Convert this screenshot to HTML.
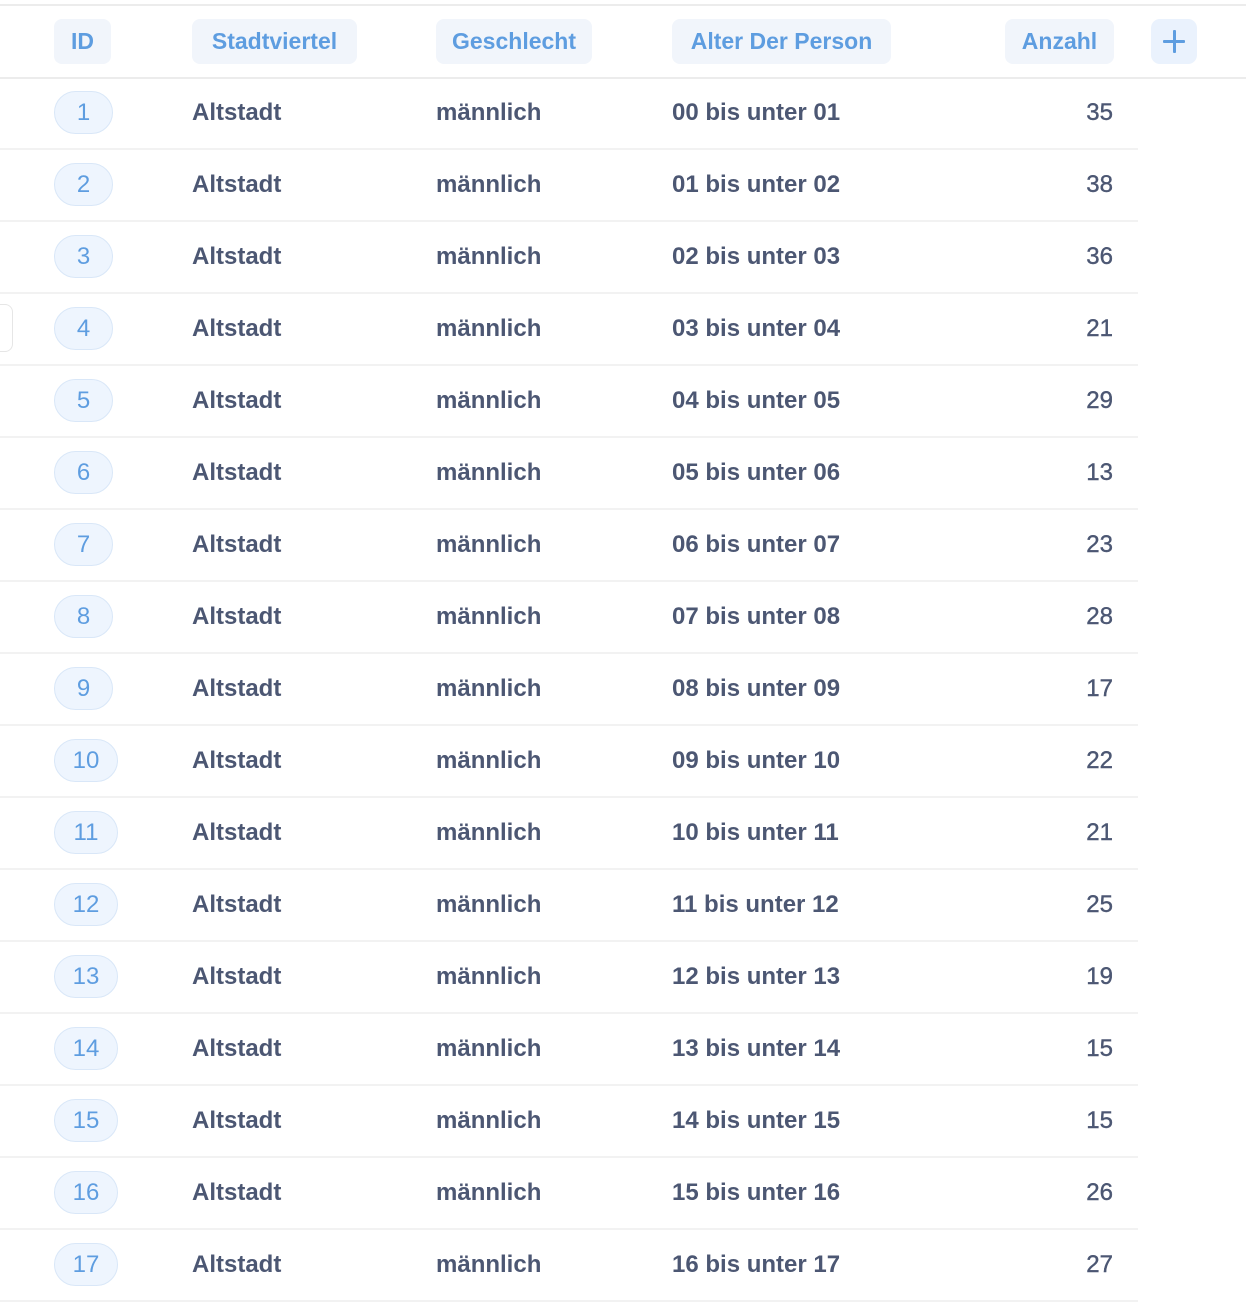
<!DOCTYPE html>
<html><head><meta charset="utf-8"><style>
*{margin:0;padding:0;box-sizing:border-box}
body{width:1246px;height:1306px;background:#fff;position:relative;overflow:hidden;font-family:"Liberation Sans",sans-serif;color:#4c5773}
.topline{position:absolute;left:0;top:4px;width:1246px;height:2px;background:#ececec}
.hline{position:absolute;left:0;top:77px;width:1246px;height:2px;background:#ececec}
.hp{position:absolute;top:19px;height:45px;background:#f1f5fb;border-radius:8px;color:#5e9de0;font-weight:bold;font-size:23px;line-height:45px;text-align:center}
.plus{position:absolute;left:1151px;top:19px;width:46px;height:45px;background:#eaf2fd;border-radius:9px}
.plus:before{content:"";position:absolute;left:12px;top:21px;width:22px;height:3px;background:#5e9de0;border-radius:1px}
.plus:after{content:"";position:absolute;left:21.5px;top:11px;width:3px;height:23px;background:#5e9de0;border-radius:1px}
.row{position:absolute;left:0;width:1138px;height:72px;border-bottom:2px solid #f2f2f2}
.row div{position:absolute;top:0;line-height:70px;font-size:24px;font-weight:bold;white-space:nowrap}
.row .id{left:54px;top:13px;height:43px;line-height:41px;border:1.5px solid #d9e7f8;background:#eef5fe;border-radius:22px;color:#5e9de0;font-weight:normal;text-align:center;font-size:24px}
.row .c1{left:192px}.row .c2{left:436px}.row .c3{left:672px}
.row .c4{right:25px;font-weight:normal;text-align:right;-webkit-text-stroke:0.4px #4c5773}
.side{position:absolute;left:-10px;top:304px;width:23px;height:48px;border:1.5px solid #e6e6e6;border-radius:8px}
</style></head><body>
<div class="topline"></div>
<div class="hp" style="left:54px;width:57px">ID</div>
<div class="hp" style="left:192px;width:165px">Stadtviertel</div>
<div class="hp" style="left:436px;width:156px">Geschlecht</div>
<div class="hp" style="left:672px;width:219px">Alter Der Person</div>
<div class="hp" style="left:1005px;width:109px">Anzahl</div>
<div class="plus"></div>
<div class="hline"></div>
<div class="side"></div>
<div class="row" style="top:78px"><div class="id" style="width:59px">1</div><div class="c1">Altstadt</div><div class="c2">männlich</div><div class="c3">00 bis unter 01</div><div class="c4">35</div></div>
<div class="row" style="top:150px"><div class="id" style="width:59px">2</div><div class="c1">Altstadt</div><div class="c2">männlich</div><div class="c3">01 bis unter 02</div><div class="c4">38</div></div>
<div class="row" style="top:222px"><div class="id" style="width:59px">3</div><div class="c1">Altstadt</div><div class="c2">männlich</div><div class="c3">02 bis unter 03</div><div class="c4">36</div></div>
<div class="row" style="top:294px"><div class="id" style="width:59px">4</div><div class="c1">Altstadt</div><div class="c2">männlich</div><div class="c3">03 bis unter 04</div><div class="c4">21</div></div>
<div class="row" style="top:366px"><div class="id" style="width:59px">5</div><div class="c1">Altstadt</div><div class="c2">männlich</div><div class="c3">04 bis unter 05</div><div class="c4">29</div></div>
<div class="row" style="top:438px"><div class="id" style="width:59px">6</div><div class="c1">Altstadt</div><div class="c2">männlich</div><div class="c3">05 bis unter 06</div><div class="c4">13</div></div>
<div class="row" style="top:510px"><div class="id" style="width:59px">7</div><div class="c1">Altstadt</div><div class="c2">männlich</div><div class="c3">06 bis unter 07</div><div class="c4">23</div></div>
<div class="row" style="top:582px"><div class="id" style="width:59px">8</div><div class="c1">Altstadt</div><div class="c2">männlich</div><div class="c3">07 bis unter 08</div><div class="c4">28</div></div>
<div class="row" style="top:654px"><div class="id" style="width:59px">9</div><div class="c1">Altstadt</div><div class="c2">männlich</div><div class="c3">08 bis unter 09</div><div class="c4">17</div></div>
<div class="row" style="top:726px"><div class="id" style="width:64px">10</div><div class="c1">Altstadt</div><div class="c2">männlich</div><div class="c3">09 bis unter 10</div><div class="c4">22</div></div>
<div class="row" style="top:798px"><div class="id" style="width:64px">11</div><div class="c1">Altstadt</div><div class="c2">männlich</div><div class="c3">10 bis unter 11</div><div class="c4">21</div></div>
<div class="row" style="top:870px"><div class="id" style="width:64px">12</div><div class="c1">Altstadt</div><div class="c2">männlich</div><div class="c3">11 bis unter 12</div><div class="c4">25</div></div>
<div class="row" style="top:942px"><div class="id" style="width:64px">13</div><div class="c1">Altstadt</div><div class="c2">männlich</div><div class="c3">12 bis unter 13</div><div class="c4">19</div></div>
<div class="row" style="top:1014px"><div class="id" style="width:64px">14</div><div class="c1">Altstadt</div><div class="c2">männlich</div><div class="c3">13 bis unter 14</div><div class="c4">15</div></div>
<div class="row" style="top:1086px"><div class="id" style="width:64px">15</div><div class="c1">Altstadt</div><div class="c2">männlich</div><div class="c3">14 bis unter 15</div><div class="c4">15</div></div>
<div class="row" style="top:1158px"><div class="id" style="width:64px">16</div><div class="c1">Altstadt</div><div class="c2">männlich</div><div class="c3">15 bis unter 16</div><div class="c4">26</div></div>
<div class="row" style="top:1230px"><div class="id" style="width:64px">17</div><div class="c1">Altstadt</div><div class="c2">männlich</div><div class="c3">16 bis unter 17</div><div class="c4">27</div></div>
</body></html>
